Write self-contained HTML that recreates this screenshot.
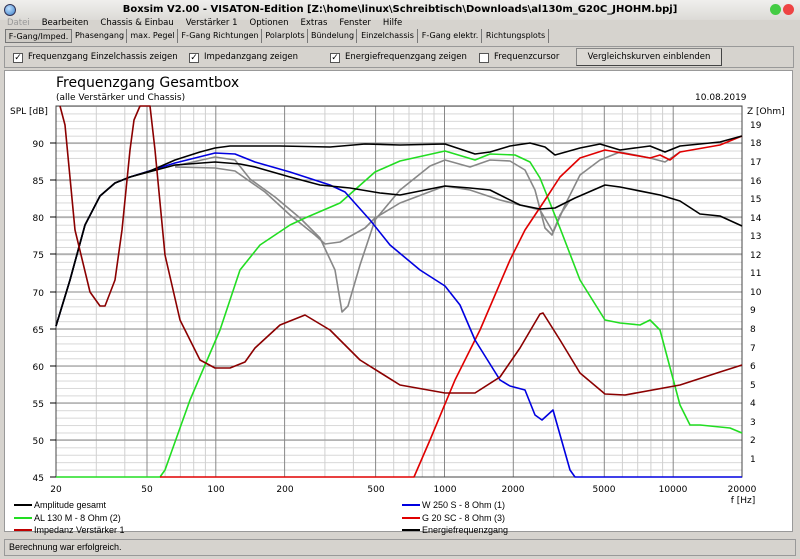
<!DOCTYPE html>
<html><head><meta charset="utf-8"><style>
*{margin:0;padding:0;box-sizing:border-box}
body{width:800px;height:559px;background:#d6d3ce;font-family:"DejaVu Sans","Liberation Sans",sans-serif;font-size:9px;color:#000;position:relative;overflow:hidden}
.abs{position:absolute;white-space:nowrap}
.title{left:0;top:0;width:800px;height:20px;background:linear-gradient(#f0efed,#dcdad6);text-align:center;font-weight:bold;font-size:10px;line-height:20px}
.menu span{margin-right:12px}
.tab{position:absolute;top:29px;height:14px;line-height:13px;border-right:1px solid #777;font-size:8px;white-space:nowrap;overflow:hidden;text-align:center}
.tb{left:4px;top:46px;width:790px;height:22px;border:1px solid #999;background:#d6d3ce}
.cb{position:absolute;top:6px;width:10px;height:10px;border:1px solid #555;background:#fff;font-size:9px;line-height:8px;text-align:center}
.lbl{position:absolute;top:5px;font-size:8.5px}
.btn{position:absolute;left:571px;top:1px;width:146px;height:18px;border:1px solid #888;border-right-color:#444;border-bottom-color:#444;background:#dcd9d4;text-align:center;line-height:17px;font-size:8.5px}
.panel{left:4px;top:70px;width:789px;height:462px;background:#fff;border:1px solid #999}
.status{left:4px;top:539px;width:792px;height:17px;border:1px solid #999;font-family:"Liberation Sans Narrow","Liberation Sans",sans-serif;font-size:9px;line-height:15px;padding-left:4px}
</style></head><body>
<div class="abs title">Boxsim V2.00 - VISATON-Edition [Z:\home\linux\Schreibtisch\Downloads\al130m_G20C_JHOHM.bpj]</div>
<div class="abs" style="left:4px;top:4px;width:12px;height:12px;border-radius:50%;background:radial-gradient(circle at 40% 35%,#bfe0ff,#3a7fc8);border:1px solid #335"></div>
<div class="abs" style="left:770px;top:4px;width:11px;height:11px;border-radius:50%;background:#4c4"></div>
<div class="abs" style="left:783px;top:4px;width:11px;height:11px;border-radius:50%;background:#e44"></div>
<div class="abs menu" style="left:7px;top:18px;font-size:8.5px"><span style="color:#999">Datei</span><span>Bearbeiten</span><span>Chassis &amp; Einbau</span><span>Verstärker 1</span><span>Optionen</span><span>Extras</span><span>Fenster</span><span>Hilfe</span></div>
<div class="tab" style="left:5px;width:67px;background:#cfccc6;border:1px solid #777">F-Gang/Imped.</div>
<div class="tab" style="left:73px;width:54px">Phasengang</div>
<div class="tab" style="left:128px;width:50px">max. Pegel</div>
<div class="tab" style="left:179px;width:83px">F-Gang Richtungen</div>
<div class="tab" style="left:263px;width:45px">Polarplots</div>
<div class="tab" style="left:309px;width:48px">Bündelung</div>
<div class="tab" style="left:358px;width:60px">Einzelchassis</div>
<div class="tab" style="left:419px;width:63px">F-Gang elektr.</div>
<div class="tab" style="left:483px;width:66px">Richtungsplots</div>
<div class="abs tb">
<div class="cb" style="left:8px">✓</div><div class="lbl" style="left:23px">Frequenzgang Einzelchassis zeigen</div>
<div class="cb" style="left:184px">✓</div><div class="lbl" style="left:199px">Impedanzgang zeigen</div>
<div class="cb" style="left:325px">✓</div><div class="lbl" style="left:340px">Energiefrequenzgang zeigen</div>
<div class="cb" style="left:474px"></div><div class="lbl" style="left:489px">Frequenzcursor</div>
<div class="btn">Vergleichskurven einblenden</div>
</div>
<div class="abs panel"></div>
<svg class="abs" style="left:0;top:0" width="800" height="559" font-family="DejaVu Sans,Liberation Sans,sans-serif">
<defs><pattern id="hp" x="0" y="106.0" width="10" height="7.42" patternUnits="userSpaceOnUse"><line x1="0" y1="0.5" x2="10" y2="0.5" stroke="#d8d8d8" stroke-width="1"/></pattern></defs>
<text x="56" y="87" font-size="14">Frequenzgang Gesamtbox</text>
<text x="56" y="100" font-size="9">(alle Verstärker und Chassis)</text>
<text x="695" y="100" font-size="9">10.08.2019</text>
<text x="10" y="114" font-size="9">SPL [dB]</text>
<text x="747" y="114" font-size="9">Z [Ohm]</text>
<rect x="56" y="106" width="686" height="371" fill="url(#hp)"/>
<g stroke="#d0d0d0" stroke-width="1">
<line x1="96.3" y1="106" x2="96.3" y2="477"/><line x1="124.8" y1="106" x2="124.8" y2="477"/>
<line x1="165.1" y1="106" x2="165.1" y2="477"/><line x1="180.4" y1="106" x2="180.4" y2="477"/><line x1="193.7" y1="106" x2="193.7" y2="477"/><line x1="205.4" y1="106" x2="205.4" y2="477"/>
<line x1="324.9" y1="106" x2="324.9" y2="477"/><line x1="353.4" y1="106" x2="353.4" y2="477"/>
<line x1="393.7" y1="106" x2="393.7" y2="477"/><line x1="409" y1="106" x2="409" y2="477"/><line x1="422.3" y1="106" x2="422.3" y2="477"/><line x1="434" y1="106" x2="434" y2="477"/>
<line x1="553.6" y1="106" x2="553.6" y2="477"/><line x1="582.1" y1="106" x2="582.1" y2="477"/>
<line x1="622.4" y1="106" x2="622.4" y2="477"/><line x1="637.7" y1="106" x2="637.7" y2="477"/><line x1="650.9" y1="106" x2="650.9" y2="477"/><line x1="662.6" y1="106" x2="662.6" y2="477"/>
</g>
<g stroke="#888" stroke-width="1">
<line x1="147" y1="106" x2="147" y2="477"/><line x1="215.8" y1="106" x2="215.8" y2="477"/><line x1="284.6" y1="106" x2="284.6" y2="477"/><line x1="375.6" y1="106" x2="375.6" y2="477"/><line x1="444.5" y1="106" x2="444.5" y2="477"/><line x1="513.3" y1="106" x2="513.3" y2="477"/><line x1="604.3" y1="106" x2="604.3" y2="477"/><line x1="673.2" y1="106" x2="673.2" y2="477"/>
<line x1="56" y1="440" x2="742" y2="440"/><line x1="56" y1="403" x2="742" y2="403"/><line x1="56" y1="366" x2="742" y2="366"/><line x1="56" y1="329" x2="742" y2="329"/><line x1="56" y1="292" x2="742" y2="292"/><line x1="56" y1="254" x2="742" y2="254"/><line x1="56" y1="217" x2="742" y2="217"/><line x1="56" y1="180" x2="742" y2="180"/><line x1="56" y1="143" x2="742" y2="143"/>
</g>
<rect x="56" y="106" width="686" height="371" fill="none" stroke="#444"/>
<g font-size="9" text-anchor="end">
<text x="44" y="147">90</text><text x="44" y="184">85</text><text x="44" y="221">80</text><text x="44" y="258">75</text><text x="44" y="296">70</text><text x="44" y="333">65</text><text x="44" y="370">60</text><text x="44" y="407">55</text><text x="44" y="444">50</text><text x="44" y="481">45</text>
</g>
<g stroke="#000"><line x1="50" y1="143" x2="56" y2="143"/><line x1="50" y1="180" x2="56" y2="180"/><line x1="50" y1="217" x2="56" y2="217"/><line x1="50" y1="254" x2="56" y2="254"/><line x1="50" y1="292" x2="56" y2="292"/><line x1="50" y1="329" x2="56" y2="329"/><line x1="50" y1="366" x2="56" y2="366"/><line x1="50" y1="403" x2="56" y2="403"/><line x1="50" y1="440" x2="56" y2="440"/><line x1="50" y1="477" x2="56" y2="477"/></g>
<g font-size="9">
<text x="750" y="128">19</text><text x="750" y="146">18</text><text x="750" y="165">17</text><text x="750" y="184">16</text><text x="750" y="202">15</text><text x="750" y="221">14</text><text x="750" y="239">13</text><text x="750" y="258">12</text><text x="750" y="276">11</text><text x="750" y="295">10</text><text x="750" y="313">9</text><text x="750" y="332">8</text><text x="750" y="351">7</text><text x="750" y="369">6</text><text x="750" y="388">5</text><text x="750" y="406">4</text><text x="750" y="425">3</text><text x="750" y="443">2</text><text x="750" y="462">1</text>
</g>
<g font-size="9" text-anchor="middle">
<text x="56" y="492">20</text><text x="147" y="492">50</text><text x="216" y="492">100</text><text x="285" y="492">200</text><text x="376" y="492">500</text><text x="445" y="492">1000</text><text x="513" y="492">2000</text><text x="604" y="492">5000</text><text x="673" y="492">10000</text><text x="742" y="492">20000</text>
<text x="743" y="503">f [Hz]</text>
</g>
<g fill="none" stroke-width="1.6" stroke-linejoin="round">
<polyline stroke="#888" points="175,166 215,157 235,160 250,179 275,197 300,218 320,238 335,270 342,312 348,306 360,265 375,220 400,190 430,166 445,160 470,167 490,160 510,161 525,170 535,190 545,228 552,235 565,205 580,175 600,160 620,152 650,158 665,162 680,152"/>
<polyline stroke="#888" points="175,167 215,168 235,171 265,192 290,215 315,235 325,244 340,242 365,228 375,218 400,203 445,186 470,190 500,200 540,210 553,232 560,215 570,200"/>
<polyline stroke="#22dd22" points="56,477 160,477 165,470 190,400 220,330 240,270 260,245 290,225 305,218 340,203 375,172 400,161 445,151 475,160 490,154 515,155 530,162 540,178 560,228 580,280 605,320 620,323 640,325 650,320 660,330 680,405 690,425 700,425 730,428 742,433"/>
<polyline stroke="#e00000" points="160,477 414,477 430,440 455,380 480,330 510,260 525,230 545,200 560,177 580,158 605,150 650,158 660,155 670,160 680,152 720,145 742,136"/>
<polyline stroke="#0000e0" points="56,326 70,280 85,225 100,196 115,183 130,177 175,163 215,153 235,154 255,162 290,172 330,185 345,192 370,220 390,245 420,270 445,286 460,305 475,340 500,380 510,386 525,390 535,415 542,420 553,410 570,470 575,477 742,477"/>
<polyline stroke="#000" points="56,326 70,280 85,225 100,196 115,183 130,177 175,165 215,162 240,164 255,167 290,177 320,185 350,188 380,193 400,195 445,186 470,188 490,190 520,205 540,209 555,208 575,198 605,185 620,187 660,195 680,201 700,214 720,216 742,226"/>
<polyline stroke="#000" points="56,326 70,280 85,225 100,196 115,183 130,177 150,171 175,160 200,152 215,148 230,146 280,146 330,147 365,144 400,145 445,144 475,154 490,152 510,146 530,143 545,147 555,155 580,148 600,144 620,150 650,146 665,152 680,146 720,142 742,136"/>
<polyline stroke="#8b0000" points="60,106 65,125 75,230 90,292 100,306 105,306 115,280 122,230 130,150 134,120 140,106 150,106 155,150 165,255 180,320 200,360 215,368 230,368 245,362 255,348 280,325 305,315 330,330 360,360 400,385 445,393 475,393 500,377 520,348 540,314 543,313 560,340 580,373 605,394 625,395 680,385 720,372 742,365"/>
</g>
<g font-size="9" font-family="Liberation Sans Narrow,Liberation Sans,sans-serif">
<line x1="14" y1="505" x2="32" y2="505" stroke="#000" stroke-width="2"/><text x="34" y="508">Amplitude gesamt</text>
<line x1="14" y1="518" x2="32" y2="518" stroke="#22dd22" stroke-width="2"/><text x="34" y="521">AL 130 M - 8 Ohm (2)</text>
<line x1="14" y1="530" x2="32" y2="530" stroke="#c00000" stroke-width="2"/><text x="34" y="533">Impedanz Verstärker 1</text>
<line x1="402" y1="505" x2="420" y2="505" stroke="#0000e0" stroke-width="2"/><text x="422" y="508">W 250 S - 8 Ohm  (1)</text>
<line x1="402" y1="518" x2="420" y2="518" stroke="#e00000" stroke-width="2"/><text x="422" y="521">G 20 SC - 8 Ohm (3)</text>
<line x1="402" y1="530" x2="420" y2="530" stroke="#000" stroke-width="2"/><text x="422" y="533">Energiefrequenzgang</text>
</g>
</svg>
<div class="abs status">Berechnung war erfolgreich.</div>
</body></html>
